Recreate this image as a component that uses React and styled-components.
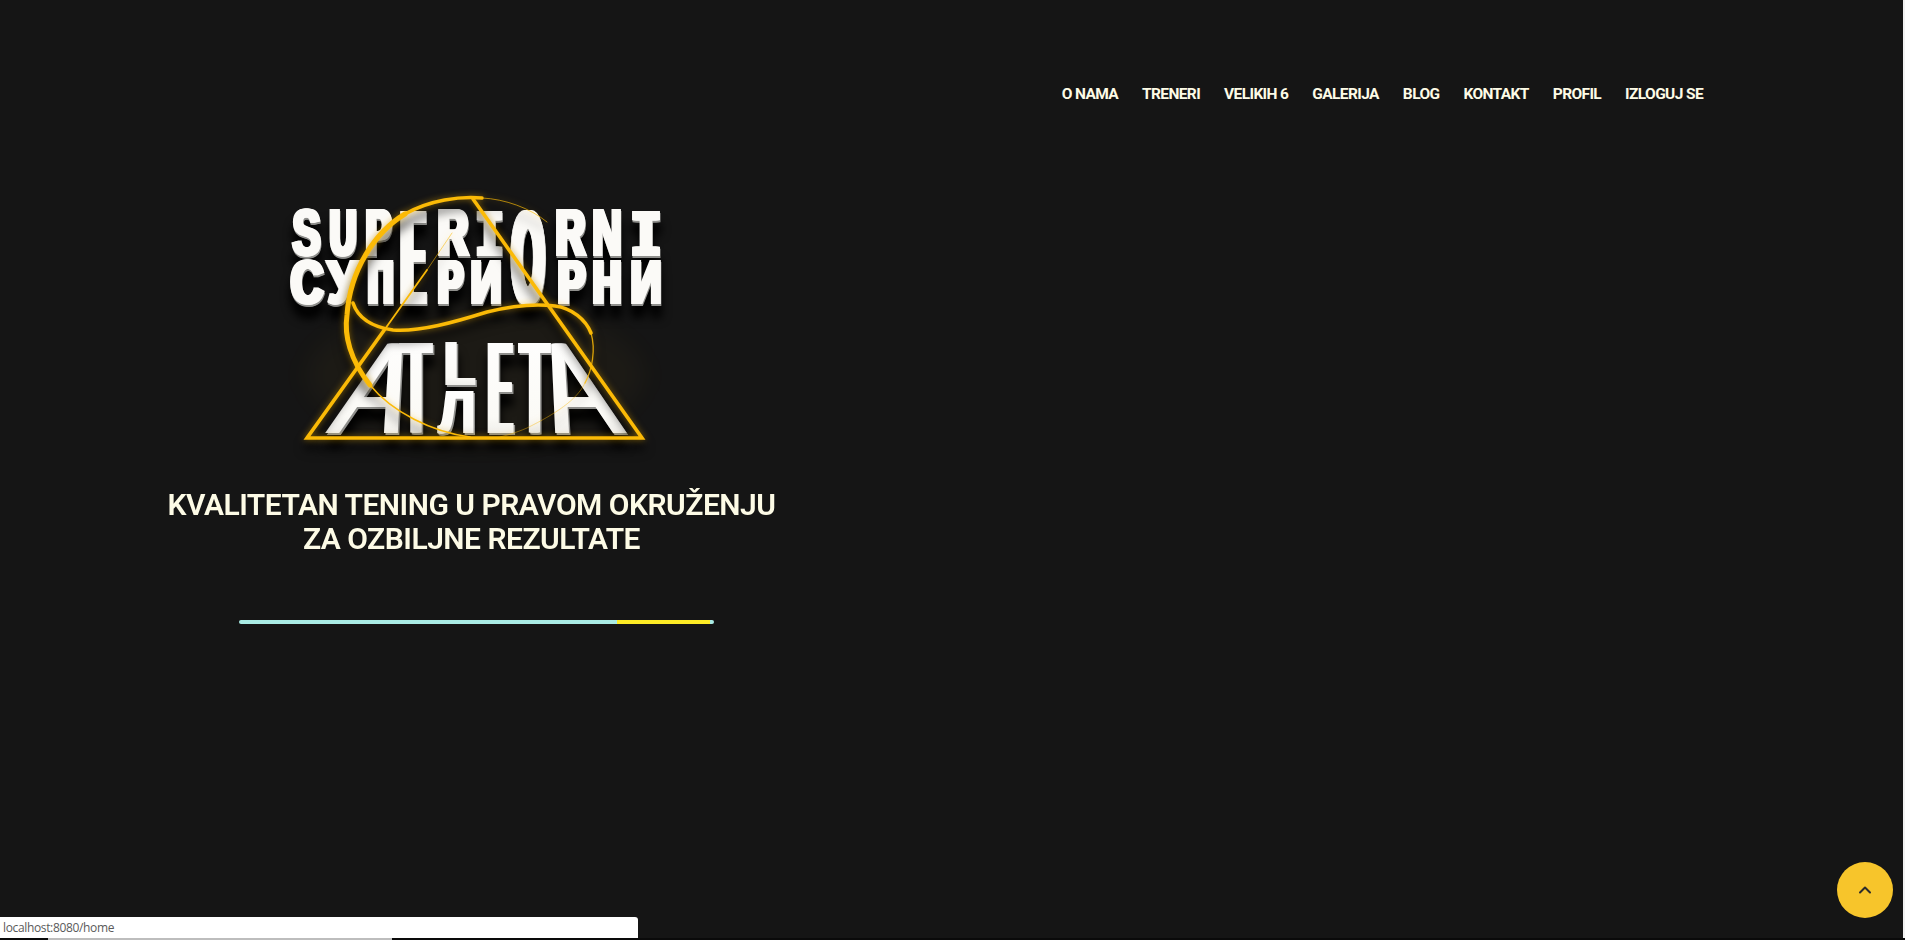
import React from "react";
import styled, { createGlobalStyle } from "styled-components";
import { ChevronUp } from "lucide-react";

const Global = createGlobalStyle`
  html, body { margin: 0; padding: 0; background: #151515; overflow: hidden; }
  * { box-sizing: border-box; }
`;

const Page = styled.div`
  position: relative;
  width: 1905px;
  height: 940px;
  overflow: hidden;
  background-color: #151515;
  color: #fdfbe6;
  font-family: "Roboto", "Liberation Sans", sans-serif;
`;

const Header = styled.header`
  display: flex;
  justify-content: flex-end;
  padding: 80px 202px 0 0;
  height: 180px;
`;

const Nav = styled.nav`
  display: flex;
  gap: 24px;
  height: 27px;
  align-items: center;
`;

const NavLink = styled.a`
  font-size: 15.5px;
  font-weight: 700;
  letter-spacing: -0.62px;
  white-space: nowrap;
  text-transform: uppercase;
`;

const Hero = styled.main`
  display: flex;
  flex-direction: column;
  align-items: center;
  width: 943px;
`;

const Logo = styled.svg`
  display: block;
  width: 400px;
  height: 290px;
  overflow: visible;
`;

const Tagline = styled.h1`
  margin: 18px 0 0;
  font-size: 30px;
  line-height: 34px;
  font-weight: 600;
  letter-spacing: -0.5px;
  text-align: center;
  white-space: nowrap;
`;

const ProgressTrack = styled.div`
  display: flex;
  justify-content: flex-end;
  width: 475px;
  height: 4px;
  margin: 64px 0 0 9px;
  padding-right: 4px;
  border-radius: 2px;
  background: #a9ebe4;
`;

const ProgressFill = styled.div`
  width: 93px;
  background: #fdeb25;
`;

const ScrollTop = styled.button`
  position: absolute;
  left: 1837px;
  top: 862px;
  width: 56px;
  height: 56px;
  padding: 0;
  border: 0;
  border-radius: 50%;
  background: #f7c52b;
  color: #2b2b2b;
  display: flex;
  align-items: center;
  justify-content: center;
`;

const StatusBar = styled.div`
  position: absolute;
  left: 0;
  top: 917px;
  width: 638px;
  height: 21px;
  padding-left: 3px;
  background: #fff;
  border-top-right-radius: 3px;
  color: #5a5a5a;
  font: 12px/21px "Open Sans", sans-serif;
  letter-spacing: -0.35px;
`;

const BottomEdge = styled.div`
  position: absolute;
  left: 0;
  right: 0;
  top: 938px;
  height: 2px;
  background: #0a0a0a;
`;

const BottomThumb = styled.div`
  margin-left: 48px;
  width: 344px;
  height: 2px;
  background: #bdbdbd;
`;

const SideEdge = styled.div`
  position: absolute;
  top: 0;
  right: 0;
  width: 2px;
  height: 938px;
  background: #f1f1f1;
`;

const GlyphText = styled.text`
  font-family: ${(p) => p.$font};
  font-weight: ${(p) => p.$weight};
`;

const CAP = 0.716;

function Glyph({ ch, x0, x1, y0, y1, weight = 700, extra = 0, font = '"Liberation Sans"', skew = 0 }) {
  const h = y1 - y0;
  const size = h / CAP;
  const width = x1 - x0 - extra;
  const copies = [];
  for (let i = 0; i <= extra; i += 1) copies.push(i);
  return (
    <>
      {copies.map((o) => (
        <GlyphText
          key={o}
          $font={font}
          $weight={weight}
          fontSize={size}
          textLength={width}
          lengthAdjust="spacingAndGlyphs"
          transform={`translate(${x0 + o} ${y1})${skew ? ` skewX(${skew})` : ""}`}
        >
          {ch}
        </GlyphText>
      ))}
    </>
  );
}

const MONO = '"Liberation Mono"';
const topRow = [
  ["S", 291, 322, 3], ["U", 328, 358, 4], ["P", 364, 393, 4], ["R", 436, 470, 4], ["I", 474, 505, 4, MONO],
  ["R", 554, 587, 4], ["N", 591, 623, 3], ["I", 629, 663, 4, MONO],
];
const bottomRow = [
  ["С", 289, 325, 4], ["У", 326, 360, 3], ["П", 366, 395, 4], ["Р", 436, 465, 4], ["И", 469, 503, 3],
  ["Р", 556, 587, 4], ["Н", 591, 623, 4], ["И", 629, 663, 3],
];

const angle = (u, h) => (Math.atan(u / 2 / h) * 180) / Math.PI;

function Words() {
  return (
    <>
      {topRow.map(([c, a, b, e = 0, f]) => (
        <Glyph key={`t${c}${a}`} ch={c} x0={a} x1={b} y0={209} y1={255} extra={e} font={f || undefined} />
      ))}
      {bottomRow.map(([c, a, b, e = 0]) => (
        <Glyph key={`b${c}${a}`} ch={c} x0={a} x1={b} y0={259} y1={303} extra={e} />
      ))}
      <Glyph ch="E" x0={398} x1={428} y0={209} y1={303} weight={400} extra={10} />
      <Glyph ch="O" x0={509} x1={547} y0={209} y1={303} extra={6} />
    </>
  );
}

function Atleta() {
  return (
    <>
      <Glyph ch="A" x0={325} x1={398} y0={340} y1={433} weight={400} extra={4} skew={-angle(69, 93)} />
      <Glyph ch="T" x0={398} x1={434} y0={340} y1={433} weight={400} extra={7} />
      <Glyph ch="L" x0={442} x1={477} y0={340} y1={385} extra={4} />
      <Glyph ch="Л" x0={437} x1={477} y0={389} y1={433} extra={3} />
      <Glyph ch="E" x0={485} x1={515} y0={340} y1={433} weight={400} extra={8} />
      <Glyph ch="T" x0={517} x1={552} y0={340} y1={433} weight={400} extra={7} />
      <Glyph ch="A" x0={555} x1={627} y0={340} y1={433} weight={400} extra={4} skew={angle(68, 93)} />
    </>
  );
}

const LetterShadow = styled.g`
  filter: drop-shadow(0 12px 5px #000);
`;

const GoldGroup = styled.g`
  fill: none;
  stroke: #fbba06;
  stroke-linecap: round;
  stroke-linejoin: miter;
  filter: drop-shadow(0 0 3px rgba(255, 185, 0, 0.5)) drop-shadow(0 9px 5px rgba(0, 0, 0, 0.75));
`;

const Halo = styled.ellipse`
  fill: rgba(255, 190, 20, 0.03);
  filter: blur(12px);
`;

function LogoArt() {
  return (
    <Logo viewBox="272 180 400 290" role="img" aria-label="Superiorni Atleta">
      <defs>
        <linearGradient id="face" x1="0" y1="0" x2="0" y2="1">
          <stop offset="0" stopColor="#ffffff" />
          <stop offset="0.7" stopColor="#fbfaf6" />
          <stop offset="1" stopColor="#dcdcd8" />
        </linearGradient>
        <g id="words">
          <Words />
        </g>
        <g id="atleta">
          <Atleta />
        </g>
      </defs>
      <Halo cx="475" cy="375" rx="170" ry="70" />
      <LetterShadow>
        <use href="#words" fill="#8f8f8c" stroke="#8f8f8c" strokeWidth="2" x="0.5" y="2" />
        <use href="#words" fill="#fbfaf7" stroke="#fbfaf7" strokeWidth="2" />
        <use href="#atleta" fill="#8f8f8c" x="1.5" y="1.5" />
        <use href="#atleta" fill="url(#face)" />
      </LetterShadow>
      <GoldGroup>
        <path d="M473 199 L642 438 L307 438 L385 329" strokeWidth="3.6" />
        <path d="M385 329 L427 270" strokeWidth="1.8" />
        <path d="M427 270 L452 233" strokeWidth="0.8" strokeOpacity="0.7" />
        <path d="M470 437 C432 432 392 412 370 385" strokeWidth="1.5" />
        <path d="M370 385 C350 360 344 335 347 315 C350 270 375 232 405 214" strokeWidth="5" />
        <path d="M405 214 C430 200 460 196 482 198" strokeWidth="3.4" />
        <path d="M482 198 C505 199 530 208 547 222" strokeWidth="0.9" strokeOpacity="0.75" />
        <path d="M353 303 C358 318 372 327 393 330 C420 332 455 322 487 312 C515 305 540 304 555 306 C572 308 586 320 591 333" strokeWidth="3.6" />
        <path d="M591 333 C596 350 592 370 585 383" strokeWidth="1.3" strokeOpacity="0.85" />
        <path d="M585 383 C577 400 555 414 527 428 C515 433 508 435 500 437" strokeWidth="0.8" strokeOpacity="0.55" />
      </GoldGroup>
    </Logo>
  );
}

const links = ["O nama", "Treneri", "Velikih 6", "Galerija", "Blog", "Kontakt", "Profil", "Izloguj se"];

export default function App() {
  return (
    <Page>
      <Global />
      <Header>
        <Nav>
          {links.map((l) => (
            <NavLink key={l}>{l}</NavLink>
          ))}
        </Nav>
      </Header>
      <Hero>
        <LogoArt />
        <Tagline>
          KVALITETAN TENING U PRAVOM OKRUŽENJU
          <br />
          ZA OZBILJNE REZULTATE
        </Tagline>
        <ProgressTrack>
          <ProgressFill />
        </ProgressTrack>
      </Hero>
      <ScrollTop aria-label="Na vrh">
        <ChevronUp size={20} strokeWidth={2.4} />
      </ScrollTop>
      <SideEdge />
      <StatusBar>localhost:8080/home</StatusBar>
      <BottomEdge>
        <BottomThumb />
      </BottomEdge>
    </Page>
  );
}
